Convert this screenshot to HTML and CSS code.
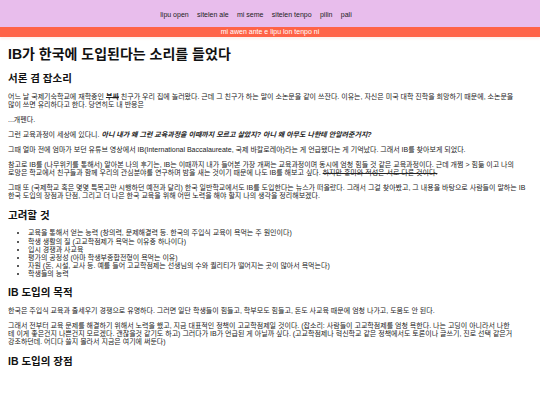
FILE: index.html
```html
<!DOCTYPE html>
<html lang="ko">
<head>
<meta charset="utf-8">
<title>IB가 한국에 도입된다는 소리를 들었다</title>
<link rel="stylesheet" href="styles.css">
</head>
<body>
<header class="site-header">
  <nav class="nav">
    <a class="nav-link" href="#">lipu open</a>
    <a class="nav-link" href="#">sitelen ale</a>
    <a class="nav-link" href="#">mi seme</a>
    <a class="nav-link" href="#">sitelen tenpo</a>
    <a class="nav-link" href="#">pilin</a>
    <a class="nav-link" href="#">pali</a>
  </nav>
  <div class="notice">mi awen ante e lipu lon tenpo ni</div>
</header>
<main class="content">
  <h1 class="title">IB가 한국에 도입된다는 소리를 들었다</h1>
  <h2 class="section">서론 겸 잡소리</h2>
  <p>어느 날 국제기숙학교에 재학중인 <del class="strike-bold">부싸</del> 친구가 우리 집에 놀러왔다. 근데 그 친구가 하는 말이 소논문을 같이 쓰잔다. 이유는, 자신은 미국 대학 진학을 희망하기 때문에, 소논문을<br>많이 쓰면 유리하다고 한다. 당연히도 내 반응은</p>
  <p>...개펜다.</p>
  <p>그런 교육과정이 세상에 있다니. <strong><em>아니 내가 왜 그런 교육과정을 이때까지 모르고 살았지? 아니 왜 아무도 나한테 안알려준거지?</em></strong></p>
  <p>그때 얼마 전에 엄마가 보던 유튜브 영상에서 IB(International Baccalaureate, 국제 바칼로레아)라는 게 언급됐다는 게 기억났다. 그래서 IB를 찾아보게 되었다.</p>
  <p>참고로 IB를 (나무위키를 통해서) 알아본 나의 후기는, IB는 이때까지 내가 들어본 가장 개쩌는 교육과정이며 동시에 엄청 힘들 것 같은 교육과정이다. 근데 개쩜 &gt; 힘듦 이고 나의<br>로망은 학교에서 친구들과 함께 우리의 관심분야를 연구하며 밤을 새는 것이기 때문에 나도 IB를 해보고 싶다. <del>하지만 흥미와 적성은 서로 다른 것이다.</del></p>
  <p>그때 또 (국제학교 혹은 몇몇 특목고만 시행하던 예전과 달리) 한국 일반학교에서도 IB를 도입한다는 뉴스가 떠올랐다. 그래서 그걸 찾아봤고, 그 내용을 바탕으로 사람들이 말하는 IB 한국 도입의 장점과 단점, 그리고 더 나은 한국 교육을 위해 어떤 노력을 해야 할지 나의 생각을 정리해보겠다.</p>
  <h2 class="section">고려할 것</h2>
  <ul class="list">
    <li>교육을 통해서 얻는 능력 (창의력, 문제해결력 등. 한국의 주입식 교육이 욕먹는 주 원인이다)</li>
    <li>학생 생활의 질 (고교학점제가 욕먹는 이유중 하나이다)</li>
    <li>입시 경쟁과 사교육</li>
    <li>평가의 공정성 (아마 학생부종합전형이 욕먹는 이유)</li>
    <li>자원 (돈, 시설, 교사 등. 예를 들어 고교학점제는 선생님의 수와 퀄리티가 떨어지는 곳이 많아서 욕먹는다)</li>
    <li>학생들의 능력</li>
  </ul>
  <h2 class="section">IB 도입의 목적</h2>
  <p>한국은 주입식 교육과 줄세우기 경쟁으로 유명하다. 그러면 일단 학생들이 힘들고, 학부모도 힘들고, 돈도 사교육 때문에 엄청 나가고, 도움도 안 된다.</p>
  <p>그래서 전부터 교육 문제를 해결하기 위해서 노력을 했고, 지금 대표적인 정책이 고교학점제일 것이다. (잡소리: 사람들이 고교학점제를 엄청 욕한다. 나는 고딩이 아니라서 나한<br>테 이게 좋은건지 나쁜건지 모르겠다. 괜찮을것 같기도 하고) 그러다가 IB가 언급된 게 아닐까 싶다. (고교학점제나 혁신학교 같은 정책에서도 토론이나 글쓰기, 진로 선택 같은거<br>강조하던데. 어디다 쓸지 몰라서 지금은 여기에 써둔다)</p>
  <h2 class="section">IB 도입의 장점</h2>
</main>
</body>
</html>
```

FILE: styles.css
```css
html, body {
  margin: 0;
  padding: 0;
  background: #ffffff;
}

body {
  font-family: "Liberation Sans", "Noto Sans CJK KR", sans-serif;
  font-size: 7px;
  line-height: 1.15;
  color: #222222;
}

.site-header {
  display: flex;
  flex-direction: column;
}

.nav {
  background: #e8bdec;
  height: 27px;
  box-sizing: border-box;
  padding-top: 3px;
  padding-right: 28px;
  display: flex;
  justify-content: center;
  align-items: center;
  gap: 8.4px;
}

.nav-link {
  color: #222222;
  text-decoration: none;
  font-size: 7px;
}

.notice {
  background: #ff6347;
  color: #ffffff;
  height: 10px;
  line-height: 10px;
  text-align: center;
  font-size: 7px;
  box-shadow: 0 2px 2px rgba(255, 120, 90, 0.12);
}

.content {
  padding: 0 8px;
}

.title {
  font-size: 14px;
  line-height: 1.15;
  font-weight: bold;
  color: #111111;
  margin: 9.4px 0;
}

.section {
  font-size: 10.5px;
  line-height: 1.15;
  font-weight: bold;
  color: #111111;
  margin: 8.7px 0;
}

p {
  margin: 7px 0;
}

.strike-bold {
  font-weight: bold;
}

.list {
  margin: 7px 0;
  padding-left: 20px;
}
```
